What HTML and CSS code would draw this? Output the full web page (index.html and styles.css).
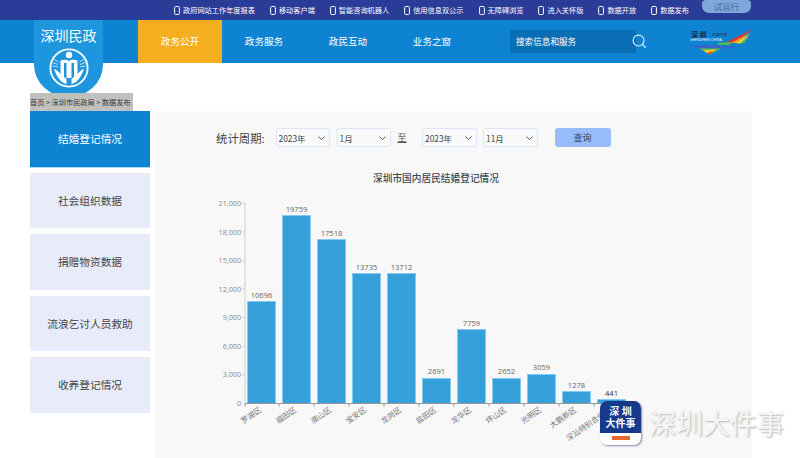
FILE: index.html
```html
<!DOCTYPE html>
<html lang="zh-CN">
<head>
    <meta charset="UTF-8">
    <meta name="viewport" content="width=device-width, initial-scale=1.0">
    <title>深圳民政 - 数据发布</title>
    <link rel="stylesheet" href="styles.css">
</head>
<body>
    <!-- 顶部链接条 -->
    <div class="topbar">
        <a class="top-link"><svg class="phone" viewBox="0 0 6 9"><rect x="0.6" y="0.5" width="4.8" height="8" rx="1"/></svg>政府网站工作年度报表</a>
        <a class="top-link"><svg class="phone" viewBox="0 0 6 9"><rect x="0.6" y="0.5" width="4.8" height="8" rx="1"/></svg>移动客户端</a>
        <a class="top-link"><svg class="phone" viewBox="0 0 6 9"><rect x="0.6" y="0.5" width="4.8" height="8" rx="1"/></svg>智能咨询机器人</a>
        <a class="top-link"><svg class="phone" viewBox="0 0 6 9"><rect x="0.6" y="0.5" width="4.8" height="8" rx="1"/></svg>信用信息双公示</a>
        <a class="top-link"><svg class="phone" viewBox="0 0 6 9"><rect x="0.6" y="0.5" width="4.8" height="8" rx="1"/></svg>无障碍浏览</a>
        <a class="top-link"><svg class="phone" viewBox="0 0 6 9"><rect x="0.6" y="0.5" width="4.8" height="8" rx="1"/></svg>进入关怀版</a>
        <a class="top-link"><svg class="phone" viewBox="0 0 6 9"><rect x="0.6" y="0.5" width="4.8" height="8" rx="1"/></svg>数据开放</a>
        <a class="top-link"><svg class="phone" viewBox="0 0 6 9"><rect x="0.6" y="0.5" width="4.8" height="8" rx="1"/></svg>数据发布</a>
        <span class="trial">试运行</span>
    </div>

    <!-- 主导航 -->
    <header>
        <div class="badge">
            <span class="badge-title">深圳民政</span>
            <svg class="badge-icon" viewBox="0 0 40 40">
                <circle cx="20" cy="20" r="18.6" fill="none" stroke="#fff" stroke-width="1.8"/>
                <circle cx="20" cy="7" r="3.2" fill="#fff"/>
                <path d="M11.5 12.5c3-1.2 6.5-1 8.5 .5c2-1.5 5.5-1.7 8.5-.5v15l-3.5 3v-15.5h-2.5v15h-5v-15h-2.5v15.5l-3.5-3z" fill="#fff"/>
                <path d="M5 21c2 .5 4 2 6 4.5l6.500 5.500v5c-4-.5-9-5-12.500-15z" fill="#fff"/>
                <path d="M35 21c-2 .5-4 2-6 4.5l-6.500 5.500v5c4-.5 9-5 12.500-15z" fill="#fff"/>
                <path d="M4.5 11l5 3M3.5 14.500l5.500 2M3.500 18l5.500 .8M35.500 11l-5 3M36.500 14.500l-5.500 2M36.500 18l-5.500 .8" stroke="#fff" stroke-width=".7" fill="none"/>
            </svg>
        </div>
        <nav>
            <a class="tab active">政务公开</a>
            <a class="tab">政务服务</a>
            <a class="tab">政民互动</a>
            <a class="tab">业务之窗</a>
        </nav>
        <div class="search">
            <span class="search-box">搜索信息和服务</span>
            <svg class="search-icon" viewBox="0 0 16 16">
                <circle cx="7" cy="7" r="5.8"/>
                <path d="M11.2 11.2l3.6 3.6"/>
            </svg>
        </div>
        <svg class="city-logo" viewBox="0 0 64 27">
            <text x="2" y="8.5" class="city-name">深 圳</text>
            <text x="23" y="7.5" class="city-small">改革开放</text>
            <text x="1" y="13" class="city-en">SHENZHEN CHINA</text>
            <polygon points="64,1 36,15 45,15" fill="#e8352c"/>
            <polygon points="62,4.5 42,15 50,15" fill="#f6a623"/>
            <polygon points="60,7.5 47,15.5 54,15" fill="#f4e03a"/>
            <polygon points="57,10 50,16 56,15" fill="#58b947"/>
            <polygon points="28,15 45,14 40,17 30,17" fill="#58b947"/>
            <polygon points="0,18 22,17 52,19 27,21 10,20" fill="#3a62c8"/>
            <polygon points="10,20.5 32,20.5 21,26.5" fill="#6cbb3c"/>
            <polygon points="14,22.5 27,21.5 21,26.5" fill="#f0c92e"/>
            <polygon points="18,25 25,23 21,26.5" fill="#e8352c"/>
        </svg>
    </header>

    <div class="crumb-row">
        <div class="crumb">首页 &gt; 深圳市民政局 &gt; 数据发布</div>
    </div>

    <main>
        <!-- 左侧分类 -->
        <aside>
            <a class="side-item active">结婚登记情况</a>
            <a class="side-item">社会组织数据</a>
            <a class="side-item">捐赠物资数据</a>
            <a class="side-item">流浪乞讨人员救助</a>
            <a class="side-item">收养登记情况</a>
        </aside>

        <section class="panel">
            <div class="filter">
                <label class="filter-label">统计周期:</label>
                <select class="pick"><option>2023年</option></select>
                <select class="pick"><option>1月</option></select>
                <span class="to">至</span>
                <select class="pick"><option>2023年</option></select>
                <select class="pick"><option>11月</option></select>
                <button class="btn-query">查询</button>
            </div>

            <!-- 柱状图,viewBox 与页面坐标一致 -->
            <svg class="chart" viewBox="155 160 597 298">
                <text x="436" y="182" class="chart-title">深圳市国内居民结婚登记情况</text>

                <g class="y-label">
                    <text x="241" y="206">21,000</text>
                    <text x="241" y="235">18,000</text>
                    <text x="241" y="263">15,000</text>
                    <text x="241" y="292">12,000</text>
                    <text x="241" y="320">9,000</text>
                    <text x="241" y="349">6,000</text>
                    <text x="241" y="377">3,000</text>
                    <text x="241" y="406">0</text>
                </g>
                <path class="axis-y" d="M245 203.5V403.5M242 203.5h3M242 232h3M242 260.7h3M242 289.2h3M242 317.7h3M242 346.3h3M242 374.8h3"/>

                <g class="bar">
                    <rect x="247.5" y="301.5" width="28" height="102"/>
                    <rect x="282.5" y="215.5" width="28" height="188"/>
                    <rect x="317.5" y="239.5" width="28" height="164"/>
                    <rect x="352.5" y="273.5" width="28" height="130"/>
                    <rect x="387.5" y="273.5" width="28" height="130"/>
                    <rect x="422.5" y="378.5" width="28" height="25"/>
                    <rect x="457.5" y="329.5" width="28" height="74"/>
                    <rect x="492.5" y="378.5" width="28" height="25"/>
                    <rect x="527.5" y="374.5" width="28" height="29"/>
                    <rect x="562.5" y="391.5" width="28" height="12"/>
                    <rect x="597.5" y="399.5" width="28" height="4"/>
                </g>
                <path class="axis-x" d="M245 403.5H632M245 403.5v3M279 403.5v3M314 403.5v3M349 403.5v3M384 403.5v3M419 403.5v3M454 403.5v3M489 403.5v3M524 403.5v3M559 403.5v3M594 403.5v3M629 403.5v3"/>

                <g class="value">
                    <text x="261.5" y="298">10696</text>
                    <text x="296.5" y="212">19759</text>
                    <text x="331.5" y="236">17518</text>
                    <text x="366.5" y="270">13735</text>
                    <text x="401.5" y="270">13712</text>
                    <text x="436.5" y="374">2691</text>
                    <text x="471.5" y="326">7759</text>
                    <text x="506.5" y="374">2652</text>
                    <text x="541.5" y="370">3059</text>
                    <text x="576.5" y="388">1278</text>
                    <text x="611.5" y="396" class="value-dark">441</text>
                </g>

                <g class="x-label">
                    <text transform="translate(262 411) rotate(-35)">罗湖区</text>
                    <text transform="translate(297 411) rotate(-35)">福田区</text>
                    <text transform="translate(332 411) rotate(-35)">南山区</text>
                    <text transform="translate(367 411) rotate(-35)">宝安区</text>
                    <text transform="translate(402 411) rotate(-35)">龙岗区</text>
                    <text transform="translate(437 411) rotate(-35)">盐田区</text>
                    <text transform="translate(472 411) rotate(-35)">龙华区</text>
                    <text transform="translate(507 411) rotate(-35)">坪山区</text>
                    <text transform="translate(542 411) rotate(-35)">光明区</text>
                    <text transform="translate(577 411) rotate(-35)">大鹏新区</text>
                    <text transform="translate(612 411) rotate(-35)">深汕特别合作区</text>
                </g>
            </svg>
        </section>
    </main>

    <!-- 右下角水印 -->
    <div class="mark">
        <div class="mark-icon">
            <div class="mark-top">深 圳<br>大件事</div>
            <div class="mark-bottom"><span class="mark-tag"></span></div>
        </div>
        <span class="mark-text">深圳大件事</span>
    </div>
</body>
</html>
```

FILE: styles.css
```css
html, body {
    margin: 0;
    padding: 0;
}
body {
    position: relative;
    width: 800px;
    height: 458px;
    overflow: hidden;
    background-color: #fff;
    color: #333;
    font-family: "Noto Sans CJK SC", "Liberation Sans", sans-serif;
}
/* 顶部链接条 */
.topbar {
    display: flex;
    align-items: center;
    gap: 15px;
    height: 20px;
    padding-left: 174px;
    background-color: #2b3b98;
    color: #fff;
    font-size: 7.2px;
}
.top-link {
    display: flex;
    align-items: center;
    gap: 3px;
    white-space: nowrap;
}
.phone {
    width: 6px;
    height: 9px;
    fill: none;
    stroke: #fff;
}
.trial {
    width: 49px;
    height: 13px;
    margin: 0 0 7px -2px;
    border-radius: 4px 4px 7px 7px;
    background-color: #7fa8da;
    color: #44699c;
    font-size: 8.5px;
    line-height: 12px;
    text-align: center;
}
/* 主导航 */
header {
    position: relative;
    display: flex;
    align-items: center;
    height: 43px;
    padding-left: 138px;
    background-color: #0e83d1;
    color: #fff;
}
.badge {
    position: absolute;
    left: 34px;
    top: 0;
    width: 69px;
    height: 77px;
    border-radius: 0 0 35px 35px / 0 0 33px 33px;
    background-color: #1e96de;
    text-align: center;
}
.badge-title {
    display: block;
    margin-top: 5px;
    font-size: 14px;
    line-height: 20px;
}
.badge-icon {
    display: block;
    width: 40px;
    height: 40px;
    margin: 3px auto 0;
}
nav {
    display: flex;
    height: 100%;
}
.tab {
    width: 84px;
    font-size: 9.6px;
    line-height: 43px;
    text-align: center;
}
.tab.active {
    background-color: #f5ae20;
}
.search {
    display: flex;
    align-items: center;
    margin-left: 36px;
}
.search-box {
    width: 120px;
    height: 23px;
    padding-left: 6px;
    background-color: #0a6eb5;
    font-size: 8.6px;
    line-height: 23px;
}
.search-icon {
    width: 15px;
    height: 15px;
    margin-left: -4px;
    fill: none;
    stroke: #d8eefb;
    stroke-width: 1.2;
}
.city-logo {
    width: 64px;
    height: 27px;
    margin: 0 0 0 42px;
}
.city-name {
    fill: #1d2a3a;
    font-size: 7px;
    font-weight: 700;
}
.city-small {
    fill: #1d2a3a;
    font-size: 3.8px;
}
.city-en {
    fill: #e6f2fb;
    font-size: 3.6px;
    font-family: "Liberation Sans", sans-serif;
}
/* 面包屑 */
.crumb-row {
    display: flex;
    align-items: flex-end;
    height: 48px;
    padding-left: 30px;
}
.crumb {
    position: relative;
    width: 103px;
    height: 18px;
    background-color: #c0c0be;
    color: #3a3a3a;
    font-size: 7.2px;
    line-height: 18px;
    white-space: nowrap;
}
/* 内容区 */
main {
    display: flex;
    gap: 5px;
    height: 347px;
    padding-left: 30px;
}
aside {
    display: flex;
    flex-direction: column;
    gap: 6px;
    width: 120px;
}
.side-item {
    height: 55.5px;
    background-color: #e8ecfa;
    color: #444;
    font-size: 10.7px;
    line-height: 55px;
    text-align: center;
    white-space: nowrap;
}
.side-item.active {
    background-color: #0e83d1;
    color: #fff;
    box-shadow: 0 1px 0 #a8d6f2;
}
.panel {
    width: 597px;
    height: 347px;
    background-color: #f8f8f8;
}
.filter {
    display: flex;
    align-items: center;
    height: 19px;
    padding: 17px 0 13px 61px;
}
.filter-label {
    width: 59.5px;
    color: #444;
    font-size: 11.4px;
    white-space: nowrap;
}
.pick {
    width: 54.5px;
    height: 19px;
    margin-right: 6.5px;
    padding: 0 0 0 2px;
    border: 1px solid #d9e6fb;
    border-radius: 2px;
    background: #fafafa url("data:image/svg+xml,%3Csvg xmlns='http://www.w3.org/2000/svg' width='7' height='4'%3E%3Cpath d='M.5 .5l3 3 3-3' fill='none' stroke='%23555'/%3E%3C/svg%3E") no-repeat right 4px center;
    color: #444;
    font-family: inherit;
    font-size: 8.4px;
    appearance: none;
}
.to {
    width: 24.5px;
    color: #555;
    font-size: 9px;
    text-decoration: underline;
}
.btn-query {
    width: 56px;
    height: 19px;
    margin-left: 10.5px;
    padding: 0;
    border: none;
    border-radius: 3px;
    background-color: #98bcf9;
    color: #3a4660;
    font-family: inherit;
    font-size: 9px;
}
/* 柱状图 */
.chart {
    display: block;
    width: 597px;
    height: 298px;
    font-family: "Noto Sans CJK SC", sans-serif;
}
.chart-title {
    fill: #3d4a55;
    font-size: 9.7px;
    font-weight: 500;
    text-anchor: middle;
}
.y-label text {
    fill: #8a8a8a;
    font-family: "Open Sans", sans-serif;
    font-size: 7.2px;
    text-anchor: end;
}
.axis-y {
    fill: none;
    stroke: #cfcfcf;
}
.axis-x {
    fill: none;
    stroke: #999;
}
.bar rect {
    fill: #36a0db;
    stroke: #84c9f0;
}
.value text {
    fill: #666;
    font-family: "Open Sans", sans-serif;
    font-size: 7.6px;
    text-anchor: middle;
}
.value .value-dark {
    fill: #333;
}
.x-label text {
    fill: #777;
    font-size: 7.6px;
    text-anchor: end;
}
/* 水印 */
.mark {
    position: absolute;
    left: 600px;
    top: 401px;
    display: flex;
    align-items: center;
    gap: 8px;
}
.mark-icon {
    width: 41px;
    height: 44px;
    overflow: hidden;
    border-radius: 7px;
    background-color: #fff;
    box-shadow: 1px 1px 2px rgba(60, 70, 110, 0.6);
}
.mark-top {
    position: relative;
    height: 32px;
    padding-top: 4px;
    box-sizing: border-box;
    background-color: #17398c;
    color: #fff;
    font-size: 10px;
    font-weight: 700;
    line-height: 12px;
    text-align: center;
}
.mark-bottom {
    display: flex;
    justify-content: center;
    padding-top: 3px;
}
.mark-tag {
    width: 18px;
    height: 4px;
    background-color: #e8672f;
}
.mark-text {
    color: #f4f4f4;
    font-size: 27px;
    line-height: 44px;
    white-space: nowrap;
    text-shadow: 1px 1px 2px #b4b4b4;
}
```
